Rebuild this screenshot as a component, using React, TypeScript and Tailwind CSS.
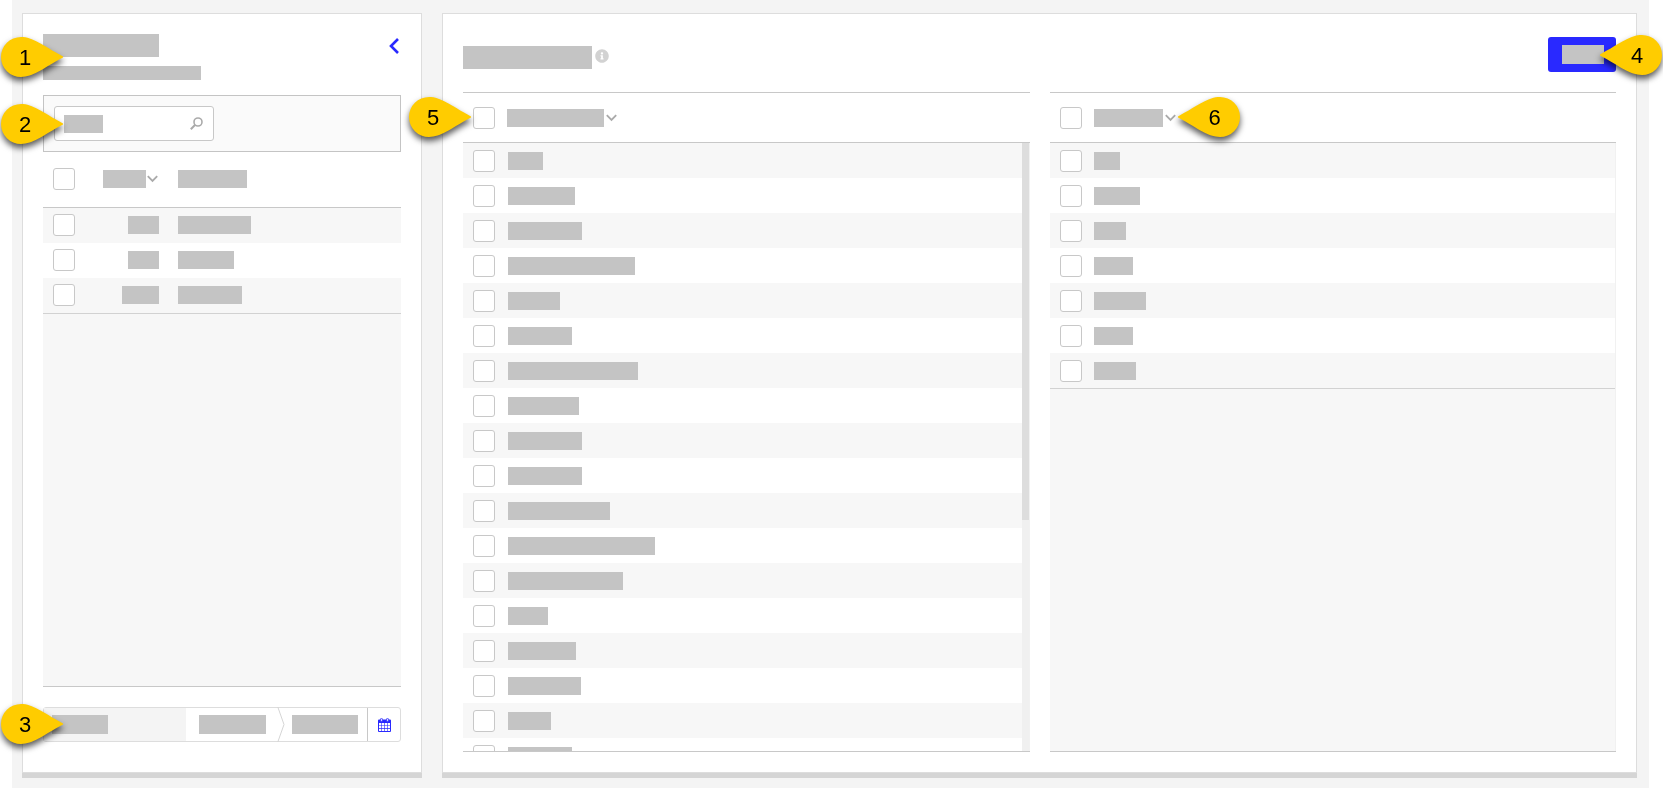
import type { ReactNode } from "react";
import clsx from "clsx";
import { FaInfoCircle } from "react-icons/fa";

const orders = [
  { id: "w-[31px]", name: "w-[73px]" },
  { id: "w-[31px]", name: "w-[56px]" },
  { id: "w-[37px]", name: "w-[64px]" },
];

const available = [
  "w-[35px]", "w-[67px]", "w-[74px]", "w-[127px]", "w-[52px]", "w-[64px]",
  "w-[130px]", "w-[71px]", "w-[74px]", "w-[74px]", "w-[102px]", "w-[147px]",
  "w-[115px]", "w-[40px]", "w-[68px]", "w-[73px]", "w-[43px]", "w-[64px]",
];

const assigned = [
  "w-[26px]", "w-[46px]", "w-[32px]", "w-[39px]", "w-[52px]", "w-[39px]", "w-[42px]",
];

function Bar({ className }: { className: string }) {
  return <span className={clsx("block shrink-0 bg-[#c4c4c4]", className)} />;
}

function Check({ label }: { label: string }) {
  return (
    <input
      type="checkbox"
      aria-label={label}
      className="block size-[22px] shrink-0 appearance-none rounded-[3px] border border-[#c8c8c8] bg-white checked:bg-[#2929ff]"
    />
  );
}

function SortButton() {
  return (
    <button type="button" aria-label="Sort" className="block shrink-0">
      <svg width="11" height="8" viewBox="0 0 11 8" fill="none" stroke="#aaa" strokeWidth="1.8">
        <path d="M0.8 1.2L5.5 6L10.2 1.2" />
      </svg>
    </button>
  );
}

function Marker({ n, flip, className }: { n: number; flip?: boolean; className: string }) {
  return (
    <div className={clsx("pointer-events-none absolute z-10 h-10 w-[62px]", className)}>
      <svg
        viewBox="0 0 62 40"
        className={clsx("h-10 w-[62px] overflow-visible", flip ? "-scale-x-100" : "")}
      >
        <path d="M20 0C32 0 41 8 62 19.4V20.6C41 32 32 40 20 40A20 20 0 0 1 20 0Z" fill="#fc0" />
      </svg>
      <span
        className={clsx(
          "absolute top-0 w-10 pt-px text-center text-[22px] leading-10 text-black",
          flip ? "right-[5px]" : "left-1"
        )}
      >
        {n}
      </span>
    </div>
  );
}

const markerShadow = "drop-shadow-[0_4px_3px_rgba(0,0,0,0.65)]";

function PickList({
  title,
  titleWidth,
  rows,
  rowGap,
  scroll,
  children,
}: {
  title: string;
  titleWidth: string;
  rows: string[];
  rowGap: string;
  scroll?: boolean;
  children: ReactNode;
}) {
  return (
    <div className="flex min-h-0 min-w-0 flex-col border-b border-[#c8c8c8]">
      <div className="relative flex h-[51px] shrink-0 items-center border-y border-[#c8c8c8] pl-2.5">
        <Check label={`Select all ${title}`} />
        <Bar className={clsx("ml-3 mr-0.5 h-[18px]", titleWidth)} />
        <SortButton />
        {children}
      </div>
      <div className="flex min-h-0 flex-1 border-r border-[#f1f1f1]">
        <div className={clsx("min-h-0 flex-1 overflow-hidden", scroll ? "bg-white" : "bg-[#f7f7f7]")}>
          <table className="block w-full">
            <tbody className={clsx("block", !scroll && "border-b border-[#d2d2d2]")}>
              {rows.map((w, i) => (
                <tr
                  key={i}
                  className={clsx("flex h-[35px] items-center pt-px pl-2.5 odd:bg-[#f7f7f7] even:bg-white", rowGap)}
                >
                  <td className="block">
                    <Check label={`${title} ${i + 1}`} />
                  </td>
                  <td className="block">
                    <Bar className={clsx("h-[18px]", w)} />
                  </td>
                </tr>
              ))}
            </tbody>
          </table>
        </div>
        {scroll && (
          <div className="w-[7px] bg-[#f0f0f0]">
            <div className="h-[62%] bg-[#ddd]" />
          </div>
        )}
      </div>
    </div>
  );
}

function CalendarIcon() {
  return (
    <svg width="13" height="14" viewBox="0 0 13 14">
      <path d="M1 1.5h11a1 1 0 0 1 1 1V13a1 1 0 0 1-1 1H1a1 1 0 0 1-1-1V2.5a1 1 0 0 1 1-1z" fill="#2929ff" />
      <path
        d="M1 5h2.4v2.4H1zM4 5h2.3v2.4H4zM6.9 5h2.3v2.4H6.9zM9.8 5H12v2.4H9.8zM1 8h2.4v2.3H1zM4 8h2.3v2.3H4zM6.9 8h2.3v2.3H6.9zM9.8 8H12v2.3H9.8zM1 10.9h2.4V13H1zM4 10.9h2.3V13H4zM6.9 10.9h2.3V13H6.9zM9.8 10.9H12V13H9.8z"
        fill="#fff"
      />
      <rect x="2.6" y="0.4" width="1.8" height="3" rx="0.7" fill="#fff" stroke="#2929ff" strokeWidth="0.8" />
      <rect x="8.6" y="0.4" width="1.8" height="3" rx="0.7" fill="#fff" stroke="#2929ff" strokeWidth="0.8" />
    </svg>
  );
}

function Sidebar() {
  return (
    <aside className="flex w-[400px] shrink-0 flex-col border border-[#ddd] bg-white px-5 pt-5 pb-[30px] shadow-[0_5px_0_#d5d5d5]">
      <header className="relative flex justify-between">
        <div>
          <Bar className="h-[23px] w-[116px]" />
          <Bar className="mt-[9px] h-3.5 w-[158px]" />
        </div>
        <button type="button" aria-label="Collapse" className="mt-1 mr-0.5 block h-4">
          <svg width="10" height="16" viewBox="0 0 10 16" fill="none" stroke="#2929ff" strokeWidth="2.6">
            <path d="M9 1L2 8L9 15" />
          </svg>
        </button>
        <Marker n={1} className={clsx("top-[3px] -left-[42px]", markerShadow)} />
      </header>

      <div className="relative mt-[15px] border border-[#c4c4c4] bg-[#fafafa] p-2.5">
        <label className="flex h-[35px] w-40 items-center rounded-[3px] border border-[#c8c8c8] bg-white pr-2.5 pl-[9px]">
          <Bar className="h-[18px] w-[39px]" />
          <input type="text" aria-label="Search" className="min-w-0 flex-1 outline-none" />
          <svg width="13" height="13" viewBox="0 0 13 13" fill="none" stroke="#aaa">
            <circle cx="8" cy="5" r="4" strokeWidth="1.6" />
            <path d="M5.2 7.8L0.8 12.2" strokeWidth="2" />
          </svg>
        </label>
        <Marker n={2} className={clsx("top-2 -left-[43px]", markerShadow)} />
      </div>

      <div className="flex min-h-0 flex-1 flex-col overflow-hidden border-b border-[#c8c8c8] bg-[#f7f7f7]">
        <table className="block w-full">
          <thead className="block border-b border-[#c8c8c8] bg-white">
            <tr className="flex h-[55px] items-center pb-px pl-2.5">
              <th className="block w-[50px]">
                <Check label="Select all" />
              </th>
              <th className="flex w-[75px] items-center gap-px">
                <Bar className="h-[18px] w-[43px]" />
                <SortButton />
              </th>
              <th className="block">
                <Bar className="h-[18px] w-[69px]" />
              </th>
            </tr>
          </thead>
          <tbody className="block border-b border-[#d2d2d2]">
            {orders.map((o, i) => (
              <tr key={i} className="flex h-[35px] items-center pb-px pl-2.5 odd:bg-[#f7f7f7] even:bg-white">
                <td className="block w-[50px]">
                  <Check label={`Select row ${i + 1}`} />
                </td>
                <td className="flex w-[75px] justify-end pr-[19px]">
                  <Bar className={clsx("h-[18px]", o.id)} />
                </td>
                <td className="block">
                  <Bar className={clsx("h-[18px]", o.name)} />
                </td>
              </tr>
            ))}
          </tbody>
        </table>
      </div>

      <div className="relative mt-5 flex h-[35px] shrink-0 items-stretch rounded-[3px] border border-[#ddd]">
        <div className="flex w-[142px] items-center bg-[#f4f4f4] pl-2">
          <Bar className="h-[19px] w-14" />
        </div>
        <button type="button" aria-label="From" className="flex items-center pr-[11px] pl-[13px]">
          <Bar className="h-[19px] w-[67px]" />
        </button>
        <svg width="8" height="35" viewBox="0 0 8 35" fill="none" stroke="#d5d5d5" className="-my-px">
          <path d="M0.8 0L7 17.5L0.8 35" />
        </svg>
        <button type="button" aria-label="To" className="flex flex-1 items-center pl-[7px]">
          <Bar className="h-[19px] w-[66px]" />
        </button>
        <button
          type="button"
          aria-label="Open calendar"
          className="flex w-[33px] items-center justify-center border-l border-[#c8c8c8]"
        >
          <CalendarIcon />
        </button>
        <Marker n={3} className={clsx("-top-1 -left-[43px]", markerShadow)} />
      </div>
    </aside>
  );
}

export default function App() {
  return (
    <div className="h-screen bg-white pr-3.5 pl-3 font-['Liberation_Sans',Arial,sans-serif]">
      <div className="flex h-full gap-5 bg-[#f4f4f4] pt-[13px] pr-3 pb-[15px] pl-2.5">
        <Sidebar />
        <main className="flex min-w-0 flex-1 flex-col border border-[#ddd] bg-white px-5 pb-5 shadow-[0_5px_0_#d5d5d5]">
          <header className="flex h-[78px] shrink-0 items-start justify-between pt-[23px]">
            <div className="mt-[9px] flex items-start gap-[3px]">
              <Bar className="h-[23px] w-[129px]" />
              <FaInfoCircle className="mt-[3px] size-3.5 text-[#d2d2d2]" />
            </div>
            <button
              type="button"
              aria-label="Save"
              className="relative flex h-[35px] w-[68px] items-center rounded-[3px] bg-[#2929ff] pl-3.5"
            >
              <Bar className="h-[19px] w-[42px]" />
              <Marker n={4} flip className={clsx("-top-0.5 -right-[46px]", markerShadow)} />
            </button>
          </header>
          <div className="grid min-h-0 flex-1 grid-cols-2 grid-rows-1 gap-5">
            <PickList title="Available" titleWidth="w-[97px]" rows={available} rowGap="gap-[13px]" scroll>
              <Marker n={5} className={clsx("top-1 -left-[54px]", markerShadow)} />
            </PickList>
            <PickList title="Assigned" titleWidth="w-[69px]" rows={assigned} rowGap="gap-3">
              <Marker n={6} flip className={clsx("top-1 left-32", markerShadow)} />
            </PickList>
          </div>
        </main>
      </div>
    </div>
  );
}
